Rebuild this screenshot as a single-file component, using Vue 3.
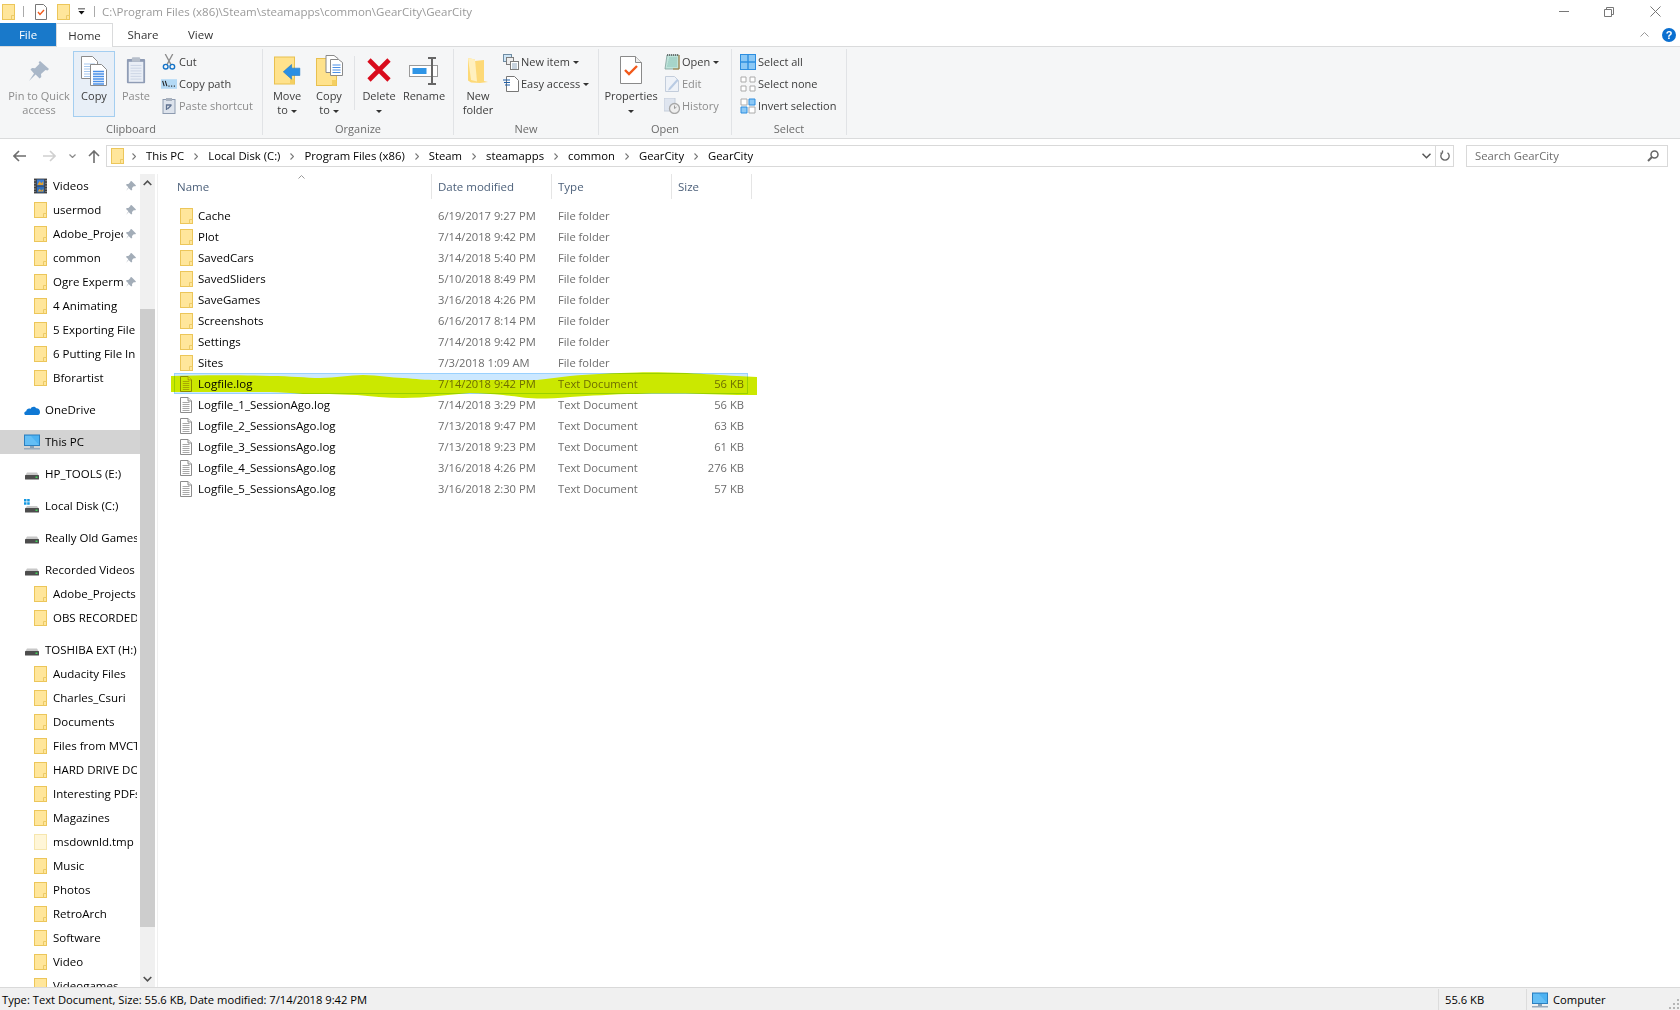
<template>
  <div class="window">
    <svg class="defs" width="0" height="0">
      <symbol id="folder" viewBox="0 0 13 16">
        <rect x=".5" y=".5" width="12" height="15" fill="#ffe69b" stroke="#ecc65a" />
        <path d="M9.5 15.500v-4h3" fill="none" stroke="#eccb68" />
      </symbol>
      <symbol id="paleFolder" viewBox="0 0 13 16">
        <rect x=".5" y=".5" width="12" height="15" fill="#fff6d8" stroke="#f6e6ae" />
      </symbol>
      <symbol id="textFile" viewBox="0 0 12 16">
        <path d="M.5.5h7.5l3.5 3.5v11.5h-11z" fill="#fff" stroke="#8c8c8c" />
        <path d="M8 .5v3.5h3.5" fill="#eee" stroke="#8c8c8c" />
        <path d="M2.5 5.5h7M2.5 7.5h7M2.5 9.5h7M2.5 11.5h7M2.5 13.5h7" stroke="#a8a8a8" />
      </symbol>
      <symbol id="film" viewBox="0 0 14 16">
        <rect width="14" height="16" fill="#3c3c3c" />
        <rect x="3" y="1" width="8" height="6.5" fill="#3d7fd6" />
        <rect x="3" y="8.5" width="8" height="6.5" fill="#2f6fbe" />
        <path d="M4 6l2-3 2 2 2-2v4H4z" fill="#e0a030" />
        <path d="M4 14l2-3 2 2 2-2v3z" fill="#e0a030" />
        <path d="M1 1.5v13M13 1.5v13" stroke="#ccc" stroke-dasharray="1.5 1.5" />
      </symbol>
      <symbol id="pin" viewBox="0 0 10 10">
        <path d="M5.5 0l4.500 4.500-1 1-1-.4-2 2 .2 1.700-1 .7-2.600-2.600L0 10l2.400-3.700L0 3.900l.7-1 1.700.2 2-2-.2-.6z" fill="#a3adb8" />
      </symbol>
      <symbol id="cloud" viewBox="0 0 16 16">
        <path d="M1 13c-1.400-1.500-.6-3.600 1.200-3.800C2.600 6.800 5 6 6.400 7 7.400 4.400 11 3.700 12.400 6.300c2.200 0 3.600 1.700 3.600 3.700 0 1.600-.7 3-2 3z" fill="#0f78d4" />
      </symbol>
      <symbol id="monitor" viewBox="0 0 16 16">
        <rect x=".5" y="1" width="15" height="10.500" fill="#4db2f2" stroke="#2b7fbf" />
        <path d="M1 11h14L7 2H1z" fill="#7cc9f7" opacity=".5" />
        <rect x="6" y="12" width="4" height="2" fill="#8aa0b4" />
        <rect y="14" width="16" height="1.500" fill="#98aabb" />
      </symbol>
      <symbol id="drive" viewBox="0 0 16 16">
        <path d="M1.500 9L3 6.500h10L14.500 9z" fill="#c8c8c8" />
        <rect x="1" y="9" width="14" height="4.500" rx=".5" fill="#4d4d4d" />
        <rect x="11.500" y="10.500" width="2" height="1.500" fill="#41d35a" />
      </symbol>
      <symbol id="windrive" viewBox="0 0 16 16">
        <path d="M1.500 10L3 8h10L14.500 10z" fill="#c8c8c8" />
        <rect x="1" y="10" width="14" height="4.500" rx=".5" fill="#4d4d4d" />
        <rect x="11.500" y="11.500" width="2" height="1.500" fill="#41d35a" />
        <path d="M0 1h2.500v2.500H0zM3.200 1h2.500v2.500H3.200zM0 4.200h2.500v2.500H0zM3.200 4.200h2.500v2.500H3.200z" fill="#1297e0" />
      </symbol>
      <symbol id="pinBig" viewBox="0 0 22 22">
        <path d="M12 1l9 8-1.500 1.500-2-.6-4.500 4 .3 3-1.700 1.500-4-4L1 21l5-7.500-3.500-4L4 8l3 .3 4.500-4.500-.9-1.500z" fill="#a9b7c8" />
      </symbol>
      <symbol id="copyBig" viewBox="0 0 26 30">
        <path d="M.5.5h11l5 5v17H.5z" fill="#fff" stroke="#8a8a8a" />
        <path d="M3 8h11M3 10.500h11M3 13h11M3 15.500h7M3 18h7M3 20.500h7" stroke="#a7c8ee" stroke-width="1.200" />
        <path d="M9.500 8.500h11l5 5v16h-16z" fill="#fff" stroke="#8a8a8a" />
        <path d="M12 15.500h11M12 18h11M12 20.500h11M12 23h11M12 25.500h11M12 28h11" stroke="#4a90e8" stroke-width="1.300" />
      </symbol>
      <symbol id="pasteBig" viewBox="0 0 22 30">
        <rect x="1" y="3" width="20" height="26.500" rx="1" fill="#8f9cb5" />
        <rect x="3" y="6" width="16" height="22" fill="#e9eef6" />
        <path d="M5 10h12M5 13h12M5 16h12M5 19h12M5 22h12M5 25h12" stroke="#c9d3e3" />
        <rect x="6.500" y="1" width="9" height="5" rx="1" fill="#b7bfcb" />
      </symbol>
      <symbol id="scissors" viewBox="0 0 14 17">
        <path d="M3 0l6 11M11 0L5 11" stroke="#8c8c8c" stroke-width="1.400" fill="none" />
        <circle cx="3.500" cy="13.500" r="2.500" fill="none" stroke="#1573c7" stroke-width="1.500" />
        <circle cx="10.500" cy="13.500" r="2.500" fill="none" stroke="#1573c7" stroke-width="1.500" />
      </symbol>
      <symbol id="copyPath" viewBox="0 0 15 10">
        <rect width="15" height="9" y=".5" fill="#b3d9f5" />
        <path d="M1.500 2l1.500 5M4 2l1.500 5" stroke="#222" fill="none" />
        <path d="M7 7h1M9.500 7h1M12 7h1" stroke="#222" />
      </symbol>
      <symbol id="pasteSmall" viewBox="0 0 13 16">
        <rect x=".5" y="1.500" width="12" height="14" fill="#dde3ec" stroke="#8d9bb0" />
        <rect x="3.500" y="0" width="6" height="3" fill="#a9b2bf" />
        <path d="M4 12V7h5M5 11l4-4" stroke="#5f7290" fill="none" stroke-width="1.300" />
      </symbol>
      <symbol id="moveBig" viewBox="0 0 27 28">
        <rect x=".5" y=".5" width="20" height="27" fill="#ffe28c" stroke="#e8c04f" />
        <rect x="16" y="22" width="4.500" height="5.500" fill="#f4cf62" />
        <path d="M9 21l9-8v4h9v8h-9v4z" transform="translate(1 -4) scale(.92)" fill="#2b8fe3" stroke="#1975c4" stroke-width=".6" />
      </symbol>
      <symbol id="copyToBig" viewBox="0 0 27 31">
        <rect x=".5" y="3.500" width="20" height="27" fill="#ffe28c" stroke="#e8c04f" />
        <rect x="16" y="25" width="4.500" height="5.500" fill="#f4cf62" />
        <path d="M10 .5h8l4 3v14H10z" fill="#fff" stroke="#8a8a8a" />
        <path d="M14.500 4.500h8l4 3v13h-12z" fill="#fff" stroke="#8a8a8a" />
        <path d="M16.500 10h8M16.500 12.500h8M16.500 15h8M16.500 17.500h8" stroke="#4a90e8" stroke-width="1.200" />
      </symbol>
      <symbol id="deleteBig" viewBox="0 0 26 26">
        <path d="M3 3l20 20M23 3L3 23" stroke="#d90b1c" stroke-width="4.600" />
      </symbol>
      <symbol id="renameBig" viewBox="0 0 30 28">
        <rect x=".5" y="8.500" width="28" height="11" fill="#fff" stroke="#9a9a9a" />
        <rect x="3.500" y="11" width="14" height="6" fill="#2f95e6" />
        <path d="M19 1h8M23 1v26M19 27h8" stroke="#666" stroke-width="2" fill="none" />
      </symbol>
      <symbol id="newFolderBig" viewBox="0 0 20 28">
        <path d="M0 1l7 1.500V4l9-1v21l4 1-8 1-9-.5-3-2z" fill="#fdd977" />
        <path d="M0 1l7 1.500 2 22-6-1.500z" fill="#fff0bf" />
      </symbol>
      <symbol id="newItem" viewBox="0 0 16 16">
        <rect x=".5" y=".5" width="8" height="7" fill="#cfe6f7" stroke="#6f8ca3" />
        <rect x="3.500" y="3.500" width="7" height="7" fill="#eee" stroke="#7d7d7d" />
        <rect x="7.500" y="7.500" width="8" height="8" fill="#fff" stroke="#7d7d7d" />
        <path d="M9 10h5M9 12h5M9 14h5" stroke="#8fa6bc" />
      </symbol>
      <symbol id="easyAccess" viewBox="0 0 16 16">
        <path d="M3.500.5h8l4 4v11h-12z" fill="#fff" stroke="#777" />
        <path d="M0 4h7M1 6.500h6M2 9h5" stroke="#1f5fa8" stroke-width="1.200" />
      </symbol>
      <symbol id="propsBig" viewBox="0 0 22 28">
        <path d="M.5.5h15l6 6v21H.5z" fill="#fff" stroke="#8a8a8a" />
        <path d="M15.500.5v6h6" fill="#eee" stroke="#8a8a8a" />
        <path d="M5 14l4 4 8-8" fill="none" stroke="#f2591a" stroke-width="2.400" />
      </symbol>
      <symbol id="openIcon" viewBox="0 0 16 16">
        <path d="M3 1h12v14H1z" fill="#bfe3da" stroke="#7f9f9a" stroke-width=".8" />
        <path d="M3 1h12" stroke="#555" stroke-width="1.400" stroke-dasharray="1 1" />
        <path d="M5 4h8M4.500 6h8.500M4 8h9M3.500 10h9.500M3 12h10" stroke="#8ec6ba" />
        <path d="M15 1v14H9" stroke="#a47d3a" fill="none" />
      </symbol>
      <symbol id="editIcon" viewBox="0 0 14 16">
        <path d="M.5.500h9l4 4v11H.5z" fill="#eef2f8" stroke="#c3cddb" />
        <path d="M4 12l8-9 1.500 1.500-8 9-2.500 1z" fill="#b9cbe3" />
      </symbol>
      <symbol id="historyIcon" viewBox="0 0 16 16">
        <rect x="0" y="0" width="11" height="13" fill="#dfe5ef" stroke="#c5cedb" />
        <circle cx="10.500" cy="10.500" r="5" fill="#eee" stroke="#a7a7a7" stroke-width="1.300" />
        <path d="M10.500 7.500v3l2-1.500" stroke="#9a9a9a" fill="none" />
      </symbol>
      <symbol id="selectAll" viewBox="0 0 16 16">
        <rect x=".5" y=".5" width="15" height="15" fill="#8cc8f5" stroke="#2d8ee0" />
        <path d="M8 0v16M0 8h16" stroke="#2d8ee0" stroke-width="1.400" />
      </symbol>
      <symbol id="selectNone" viewBox="0 0 16 16">
        <path d="M1 1h5v5H1zM10 1h5v5h-5zM1 10h5v5H1zM10 10h5v5h-5z" fill="#fff" stroke="#aaa" />
      </symbol>
      <symbol id="invert" viewBox="0 0 16 16">
        <path d="M1 1h6v6H1zM9 9h6v6H9z" fill="#fff" stroke="#aaa" />
        <path d="M9 1h6v6H9zM1 9h6v6H1z" fill="#8cc8f5" stroke="#2d8ee0" />
      </symbol>
    </svg>

    <header class="titlebar">
      <svg class="ic qat-folder"><use href="#folder" /></svg>
      <span class="qat-sep"></span>
      <svg class="ic qat-doc" viewBox="0 0 12 16"><path d="M.5.5h8l3 3v12H.5z" fill="#fff" stroke="#777" /><path d="M3 8l2 2.500 4-4.500" fill="none" stroke="#f2591a" stroke-width="1.400" /></svg>
      <svg class="ic qat-folder2"><use href="#folder" /></svg>
      <svg class="qat-drop" viewBox="0 0 8 7"><path d="M0 0h8v1H0zM.5 3h7L4 7z" fill="#111" /></svg>
      <span class="qat-sep sep2"></span>
      <span class="title-path">C:\Program Files (x86)\Steam\steamapps\common\GearCity\GearCity</span>
      <div class="win-btns">
        <svg class="w-min" viewBox="0 0 10 1"><path d="M0 .5h10" stroke="#777" /></svg>
        <svg class="w-max" viewBox="0 0 10 10"><path d="M.5 2.500h7v7h-7zM2.500 2.500v-2h7v7h-2" fill="none" stroke="#777" /></svg>
        <svg class="w-close" viewBox="0 0 11 11"><path d="M.5.500l10 10M10.500.5l-10 10" stroke="#777" /></svg>
      </div>
    </header>

    <nav class="tabs">
      <span class="tab tab-file">File</span>
      <span class="tab tab-home">Home</span>
      <span class="tab tab-share">Share</span>
      <span class="tab tab-view">View</span>
      <svg class="ribbon-collapse" viewBox="0 0 9 5"><path d="M.5 4.500l4-4 4 4" fill="none" stroke="#999" /></svg>
      <span class="help">?</span>
    </nav>

    <section class="ribbon">
      <div class="group g-clip">
        <div class="group-body">
          <div class="big off w-pin"><svg class="ic i-pin"><use href="#pinBig" /></svg><span class="lbl">Pin to Quick<br />access</span></div>
          <div class="big active w-copy"><svg class="ic i-copy"><use href="#copyBig" /></svg><span class="lbl">Copy</span></div>
          <div class="big off w-paste"><svg class="ic i-paste"><use href="#pasteBig" /></svg><span class="lbl">Paste</span></div>
          <div class="small-col">
            <div class="small"><svg class="ic s-ic"><use href="#scissors" /></svg>Cut</div>
            <div class="small"><svg class="ic s-ic"><use href="#copyPath" /></svg>Copy path</div>
            <div class="small off"><svg class="ic s-ic"><use href="#pasteSmall" /></svg>Paste shortcut</div>
          </div>
        </div>
        <div class="group-label">Clipboard</div>
      </div>

      <div class="group g-org">
        <div class="group-body">
          <div class="big w-move"><svg class="ic i-move"><use href="#moveBig" /></svg><span class="lbl">Move<br />to <i class="caret"></i></span></div>
          <div class="big w-copyto"><svg class="ic i-move"><use href="#copyToBig" /></svg><span class="lbl">Copy<br />to <i class="caret"></i></span></div>
          <span class="inner-sep"></span>
          <div class="big w-del"><svg class="ic i-del"><use href="#deleteBig" /></svg><span class="lbl">Delete<br /><i class="caret"></i></span></div>
          <div class="big w-ren"><svg class="ic i-ren"><use href="#renameBig" /></svg><span class="lbl">Rename</span></div>
        </div>
        <div class="group-label">Organize</div>
      </div>

      <div class="group g-new">
        <div class="group-body">
          <div class="big w-newf"><svg class="ic i-newf"><use href="#newFolderBig" /></svg><span class="lbl">New<br />folder</span></div>
          <div class="small-col">
            <div class="small"><svg class="ic s-ic"><use href="#newItem" /></svg>New item <i class="caret"></i></div>
            <div class="small"><svg class="ic s-ic"><use href="#easyAccess" /></svg>Easy access <i class="caret"></i></div>
          </div>
        </div>
        <div class="group-label">New</div>
      </div>

      <div class="group g-open">
        <div class="group-body">
          <div class="big w-props"><svg class="ic i-props"><use href="#propsBig" /></svg><span class="lbl">Properties<br /><i class="caret"></i></span></div>
          <div class="small-col">
            <div class="small"><svg class="ic s-ic"><use href="#openIcon" /></svg>Open <i class="caret"></i></div>
            <div class="small off"><svg class="ic s-ic"><use href="#editIcon" /></svg>Edit</div>
            <div class="small off"><svg class="ic s-ic"><use href="#historyIcon" /></svg>History</div>
          </div>
        </div>
        <div class="group-label">Open</div>
      </div>

      <div class="group g-select">
        <div class="group-body">
          <div class="small-col">
            <div class="small"><svg class="ic s-ic"><use href="#selectAll" /></svg>Select all</div>
            <div class="small"><svg class="ic s-ic"><use href="#selectNone" /></svg>Select none</div>
            <div class="small"><svg class="ic s-ic"><use href="#invert" /></svg>Invert selection</div>
          </div>
        </div>
        <div class="group-label">Select</div>
      </div>
    </section>

    <div class="addr-row">
      <div class="nav-btns">
        <svg class="n-back" viewBox="0 0 13 12"><path d="M6 1L1 6l5 5M1 6h12" fill="none" stroke="#6e6e6e" stroke-width="1.600" /></svg>
        <svg class="n-fwd" viewBox="0 0 13 12"><path d="M7 1l5 5-5 5M12 6H0" fill="none" stroke="#d0d0d0" stroke-width="1.600" /></svg>
        <svg class="n-down" viewBox="0 0 7 4"><path d="M.5.500L3.500 3.500 6.500.5" fill="none" stroke="#8a8a8a" stroke-width="1.200" /></svg>
        <svg class="n-up" viewBox="0 0 12 13"><path d="M1 6l5-5 5 5M6 1v12" fill="none" stroke="#6e6e6e" stroke-width="1.600" /></svg>
      </div>
      <div class="addressbar">
        <svg class="ic crumb-folder"><use href="#folder" /></svg>
        <template v-for="(c, i) in crumbs" :key="i">
          <svg class="chev" viewBox="0 0 4 7"><path d="M.5.500l3 3-3 3" fill="none" stroke="#777" stroke-width="1.100" /></svg>
          <span class="crumb">{{ c }}</span>
        </template>
        <svg class="addr-drop" viewBox="0 0 9 6"><path d="M.5.700l4 4 4-4" fill="none" stroke="#555" stroke-width="1.500" /></svg>
        <span class="addr-refresh">
          <svg viewBox="0 0 12 13" width="10" height="12"><path d="M3 2.500a5 5 0 1 0 6 0M3 2.500V0M3 3H.5" fill="none" stroke="#666" stroke-width="1.600" /></svg>
        </span>
      </div>
      <div class="searchbox">
        <span>Search GearCity</span>
        <svg viewBox="0 0 12 12" width="12" height="12"><circle cx="7.500" cy="4.500" r="3.500" fill="none" stroke="#666" stroke-width="1.500" /><path d="M5 7l-4 4" stroke="#666" stroke-width="2" /></svg>
      </div>
    </div>

    <main class="main">
      <aside class="nav">
        <div v-for="(item, i) in navItems" :key="i" class="nav-row" :class="{ top: item.top, current: item.current }">
          <svg class="ic nav-ic"><use :href="'#' + (item.icon || 'folder')" /></svg>
          <span class="nav-text" :class="{ pinned: item.pin }">{{ item.text }}</span>
          <svg v-if="item.pin" class="ic nav-pin"><use href="#pin" /></svg>
        </div>
      </aside>
      <div class="scrollbar">
        <div class="sb-btn"><svg viewBox="0 0 9 6" width="9" height="6"><path d="M.7 5l3.800-3.800L8.300 5" fill="none" stroke="#505050" stroke-width="1.600" /></svg></div>
        <div class="sb-space"></div>
        <div class="sb-thumb"></div>
        <div class="sb-rest"></div>
        <div class="sb-btn"><svg viewBox="0 0 9 6" width="9" height="6"><path d="M.7 1l3.800 3.800L8.300 1" fill="none" stroke="#505050" stroke-width="1.600" /></svg></div>
      </div>
      <div class="files">
        <div class="file-head">
          <div class="h-cell h-name">Name<svg class="sort" viewBox="0 0 7 4"><path d="M.5 3.500l3-3 3 3" fill="none" stroke="#999" /></svg></div>
          <div class="h-cell">Date modified</div>
          <div class="h-cell">Type</div>
          <div class="h-cell h-size">Size</div>
        </div>
        <div class="file-list">
          <div v-for="f in files" :key="f.name" class="file-row" :class="{ selected: f.selected }">
            <div class="c-name">
              <svg class="ic file-ic" :class="{ doc: f.size }"><use :href="f.size ? '#textFile' : '#folder'" /></svg>{{ f.name }}
            </div>
            <div class="c-dim">{{ f.date }}</div>
            <div class="c-dim">{{ f.size ? 'Text Document' : 'File folder' }}</div>
            <div class="c-dim c-size">{{ f.size }}</div>
          </div>
          <svg class="marker" viewBox="0 0 590 28" width="590" height="28">
            <path d="M0 4C30 3 70 3 99 4 120 4 135 6 149 6 165 6 178 3 192 3 208 3 220 6 232 6 245 7 255 8 266 8 285 8 300 8 366 8 378 7 388 5 399 4 420 2 445 1 466 .5 485 0 500 1 516 1 535 2 550 3 566 4L586 5 586 23 566 23C535 22 500 21 466 22 440 22 420 24 399 25 388 26 378 26.600 366 26.600 352 26 342 24 332 23 320 22 310 21 299 21 288 22 277 23 266 24 255 25 244 26 232 26 215 26 200 24 186 23 165 22 150 22 132 22 120 21 110 20 99 20L0 20Z" fill="#cbe800" />
          </svg>
        </div>
      </div>
    </main>

    <footer class="statusbar">
      <span class="st-main">Type: Text Document, Size: 55.6 KB, Date modified: 7/14/2018 9:42 PM</span>
      <span class="st-size">55.6 KB</span>
      <span class="st-zone"><svg class="ic st-ic"><use href="#monitor" /></svg>Computer</span>
      <svg class="grip" viewBox="0 0 10 10"><path d="M8 0h2v2H8zM4 4h2v2H4zM8 4h2v2H8zM0 8h2v2H0zM4 8h2v2H4zM8 8h2v2H8z" fill="#b5b5b5" /></svg>
    </footer>
  </div>
</template>

<script setup>
const crumbs = ['This PC', 'Local Disk (C:)', 'Program Files (x86)', 'Steam', 'steamapps', 'common', 'GearCity', 'GearCity']

const navItems = [
  { text: 'Videos', icon: 'film', pin: true },
  { text: 'usermod', pin: true },
  { text: 'Adobe_Projec', pin: true },
  { text: 'common', pin: true },
  { text: 'Ogre Experm', pin: true },
  { text: '4 Animating' },
  { text: '5 Exporting File' },
  { text: '6 Putting File In' },
  { text: 'Bforartist' },
  { text: 'OneDrive', icon: 'cloud', top: true },
  { text: 'This PC', icon: 'monitor', top: true, current: true },
  { text: 'HP_TOOLS (E:)', icon: 'drive', top: true },
  { text: 'Local Disk (C:)', icon: 'windrive', top: true },
  { text: 'Really Old Games', icon: 'drive', top: true },
  { text: 'Recorded Videos (', icon: 'drive', top: true },
  { text: 'Adobe_Projects' },
  { text: 'OBS RECORDED' },
  { text: 'TOSHIBA EXT (H:)', icon: 'drive', top: true },
  { text: 'Audacity Files' },
  { text: 'Charles_Csuri' },
  { text: 'Documents' },
  { text: 'Files from MVCT' },
  { text: 'HARD DRIVE DO' },
  { text: 'Interesting PDFs' },
  { text: 'Magazines' },
  { text: 'msdownld.tmp', icon: 'paleFolder' },
  { text: 'Music' },
  { text: 'Photos' },
  { text: 'RetroArch' },
  { text: 'Software' },
  { text: 'Video' },
  { text: 'Videogames' }
]

const files = [
  { name: 'Cache', date: '6/19/2017 9:27 PM' },
  { name: 'Plot', date: '7/14/2018 9:42 PM' },
  { name: 'SavedCars', date: '3/14/2018 5:40 PM' },
  { name: 'SavedSliders', date: '5/10/2018 8:49 PM' },
  { name: 'SaveGames', date: '3/16/2018 4:26 PM' },
  { name: 'Screenshots', date: '6/16/2017 8:14 PM' },
  { name: 'Settings', date: '7/14/2018 9:42 PM' },
  { name: 'Sites', date: '7/3/2018 1:09 AM' },
  { name: 'Logfile.log', date: '7/14/2018 9:42 PM', size: '56 KB', selected: true },
  { name: 'Logfile_1_SessionAgo.log', date: '7/14/2018 3:29 PM', size: '56 KB' },
  { name: 'Logfile_2_SessionsAgo.log', date: '7/13/2018 9:47 PM', size: '63 KB' },
  { name: 'Logfile_3_SessionsAgo.log', date: '7/13/2018 9:23 PM', size: '61 KB' },
  { name: 'Logfile_4_SessionsAgo.log', date: '3/16/2018 4:26 PM', size: '276 KB' },
  { name: 'Logfile_5_SessionsAgo.log', date: '3/16/2018 2:30 PM', size: '57 KB' }
]
</script>

<style>
html,
body {
  margin: 0;
  background: #fff;
  overflow: hidden;
}
</style>

<style scoped>
.window {
  width: 1680px;
  height: 1010px;
  display: flex;
  flex-direction: column;
  overflow: hidden;
  background: #fff;
  color: #000;
  font-family: "Open Sans", "Noto Sans", sans-serif;
  font-size: 11.5px;
  line-height: 14px;
}
.defs {
  position: absolute;
}
.ic {
  display: block;
  flex: none;
}

/* title bar */
.titlebar {
  height: 23px;
  display: flex;
  align-items: center;
  flex: none;
}
.qat-folder {
  width: 13px;
  height: 16px;
  margin-left: 2px;
}
.qat-sep {
  width: 1px;
  height: 11px;
  background: #aaa;
  margin-left: 8px;
}
.qat-doc {
  width: 12px;
  height: 16px;
  margin-left: 11px;
}
.qat-folder2 {
  width: 13px;
  height: 16px;
  margin-left: 10px;
}
.qat-drop {
  width: 7px;
  height: 7px;
  margin-left: 8px;
}
.sep2 {
  margin-left: 9px;
}
.title-path {
  margin-left: 7px;
  color: #9a9a9a;
  font-size: 11.5px;
}
.win-btns {
  margin-left: auto;
  display: flex;
  align-items: center;
  height: 20px;
  padding-right: 19px;
}
.w-min {
  width: 10px;
  height: 1px;
}
.w-max {
  width: 10px;
  height: 10px;
  margin-left: 35px;
}
.w-close {
  width: 11px;
  height: 11px;
  margin-left: 36px;
}

/* tabs */
.tabs {
  height: 23px;
  flex: none;
  display: flex;
  align-items: stretch;
  border-bottom: 1px solid #dadbdc;
  position: relative;
}
.tab {
  display: flex;
  align-items: center;
  justify-content: center;
  color: #333;
  font-size: 11.5px;
}
.tab-file {
  width: 56px;
  background: #1979ca;
  color: #fff;
}
.tab-home {
  width: 57px;
  background: #fff;
  border: 1px solid #dadbdc;
  border-bottom: none;
  box-sizing: border-box;
  height: 24px;
}
.tab-share {
  width: 60px;
}
.tab-view {
  width: 55px;
}
.ribbon-collapse {
  width: 9px;
  height: 5px;
  margin-left: auto;
  align-self: center;
  margin-right: 13px;
}
.help {
  width: 14px;
  height: 14px;
  border-radius: 50%;
  background: #0a6fd0;
  color: #fff;
  font: bold 11px/14px "Liberation Sans", sans-serif;
  text-align: center;
  align-self: center;
  margin-right: 4px;
}

/* ribbon */
.ribbon {
  height: 92px;
  flex: none;
  box-sizing: border-box;
  background: #f5f6f7;
  border-bottom: 1px solid #dadbdc;
  padding: 2px 0 3px;
  display: flex;
  color: #3c3c3c;
  font-size: 11px;
}
.group {
  display: flex;
  flex-direction: column;
  border-right: 1px solid #e1e3e6;
  box-sizing: border-box;
}
.g-clip {
  width: 263px;
  padding-left: 6px;
}
.g-org {
  width: 191px;
  padding-left: 4px;
}
.g-new {
  width: 145px;
  padding-left: 4px;
}
.g-open {
  width: 133px;
  padding-left: 4px;
}
.g-select {
  width: 115px;
  padding-left: 3px;
}
.group-body {
  display: flex;
  padding-top: 2px;
  box-sizing: border-box;
  height: 73px;
}
.group-label {
  text-align: center;
  color: #6b6b6b;
  height: 13px;
  line-height: 13px;
  margin-left: -6px;
}
.g-org .group-label,
.g-new .group-label,
.g-open .group-label {
  margin-left: -4px;
}
.g-select .group-label {
  margin-left: -3px;
}
.big {
  height: 66px;
  display: flex;
  flex-direction: column;
  align-items: center;
  box-sizing: border-box;
  flex: none;
  position: relative;
}
.lbl {
  position: absolute;
  top: 38px;
  left: -6px;
  right: -6px;
  text-align: center;
  line-height: 14px;
}
.off {
  color: #8c8c8c;
}
.active {
  background: #e8eff7;
  outline: 1px solid #a4cef0;
  outline-offset: -1px;
}
.w-pin { width: 66px; }
.w-copy { width: 42px; margin-left: 1px; }
.w-paste { width: 40px; margin-left: 1px; }
.w-move { width: 40px; }
.w-copyto { width: 42px; margin-left: 1px; }
.w-del { width: 42px; margin-left: 8px; }
.w-ren { width: 44px; margin-left: 2px; }
.w-newf { width: 40px; }
.w-props { width: 56px; }
.i-pin { width: 22px; height: 22px; margin-top: 9px; }
.i-copy { width: 26px; height: 30px; margin-top: 5px; }
.i-paste { width: 20px; height: 30px; margin-top: 4px; }
.i-move { width: 27px; height: 31px; margin-top: 4px; }
.i-del { width: 26px; height: 26px; margin-top: 6px; }
.i-ren { width: 30px; height: 28px; margin-top: 6px; }
.i-newf { width: 20px; height: 28px; margin-top: 6px; }
.i-props { width: 22px; height: 28px; margin-top: 5px; }
.inner-sep {
  width: 1px;
  height: 54px;
  background: #e1e3e6;
  margin: 5px -5px 0 4px;
  flex: none;
}
.small-col {
  margin-left: 4px;
  display: flex;
  flex-direction: column;
}
.small {
  height: 22px;
  display: flex;
  align-items: center;
  white-space: nowrap;
}
.s-ic {
  width: 16px;
  height: 16px;
  margin-right: 2px;
  margin-left: 1px;
}
.caret {
  display: inline-block;
  width: 0;
  height: 0;
  border-top: 3px solid #333;
  border-left: 3px solid transparent;
  border-right: 3px solid transparent;
  vertical-align: middle;
  margin-left: 3px;
}
.lbl br + .caret {
  margin-left: 0;
}

/* address row */
.addr-row {
  height: 31px;
  flex: none;
  display: flex;
  padding-top: 6px;
  box-sizing: border-box;
}
.nav-btns {
  width: 106px;
  height: 22px;
  display: flex;
  align-items: center;
  flex: none;
}
.n-back { width: 13px; height: 12px; margin-left: 13px; }
.n-fwd { width: 13px; height: 12px; margin-left: 17px; }
.n-down { width: 7px; height: 4px; margin-left: 13px; }
.n-up { width: 12px; height: 13px; margin-left: 12px; }
.addressbar {
  width: 1348px;
  height: 22px;
  box-sizing: border-box;
  border: 1px solid #d9d9d9;
  display: flex;
  align-items: center;
  font-size: 11.3px;
}
.crumb-folder {
  width: 13px;
  height: 16px;
  margin: 0 -2px 0 4px;
}
.chev {
  width: 4px;
  height: 7px;
  margin: 0 10px;
  flex: none;
}
.crumb {
  white-space: nowrap;
}
.addr-drop {
  width: 9px;
  height: 6px;
  margin-left: auto;
  margin-right: 4px;
}
.addr-refresh {
  width: 17px;
  height: 20px;
  border-left: 1px solid #d9d9d9;
  display: flex;
  align-items: center;
  justify-content: center;
}
.searchbox {
  width: 202px;
  height: 22px;
  margin-left: 12px;
  box-sizing: border-box;
  border: 1px solid #d9d9d9;
  display: flex;
  align-items: center;
  justify-content: space-between;
  padding: 0 8px;
  color: #6d6d6d;
  font-size: 11.3px;
}

/* main */
.main {
  flex: 1;
  display: flex;
  min-height: 0;
  padding-top: 4px;
  overflow: hidden;
}
.nav {
  width: 140px;
  flex: none;
  overflow: hidden;
}
.nav-row {
  height: 24px;
  display: flex;
  align-items: center;
  padding-left: 34px;
  white-space: nowrap;
}
.nav-row.top {
  margin-top: 8px;
  padding-left: 24px;
}
.nav-row.current {
  background: #d3d3d3;
  width: 139px;
}
.nav-ic {
  width: 13px;
  height: 16px;
}
.top .nav-ic {
  width: 16px;
  height: 16px;
}
.nav-text {
  margin-left: 6px;
  width: 84px;
  overflow: hidden;
}
.top .nav-text {
  margin-left: 5px;
  width: 92px;
}
.nav-text.pinned {
  width: 70px;
}
.nav-pin {
  width: 10px;
  height: 10px;
  margin-left: 3px;
}
.scrollbar {
  width: 15px;
  flex: none;
  background: #f0f0f0;
  display: flex;
  flex-direction: column;
}
.sb-btn {
  height: 17px;
  flex: none;
  display: flex;
  align-items: center;
  justify-content: center;
}
.sb-space {
  height: 118px;
  flex: none;
}
.sb-thumb {
  height: 618px;
  flex: none;
  background: #cdcdcd;
}
.sb-rest {
  flex: 1;
}
.files {
  flex: 1;
  margin-left: 2px;
  border-left: 1px solid #f0f0f0;
  padding-left: 16px;
  min-width: 0;
}
.file-head {
  display: grid;
  grid-template-columns: 258px 120px 120px 80px;
  height: 24px;
  margin-bottom: 7px;
}
.h-cell {
  border-right: 1px solid #e5e5e5;
  color: #4c607a;
  padding-left: 6px;
  line-height: 25px;
  position: relative;
}
.h-name {
  padding-left: 3px;
}
.sort {
  position: absolute;
  width: 7px;
  height: 4px;
  left: 124px;
  top: 1px;
}
.file-list {
  position: relative;
  width: 574px;
}
.file-row {
  display: grid;
  grid-template-columns: 258px 120px 120px 76px;
  height: 21px;
  align-items: center;
  box-sizing: border-box;
  position: relative;
}
.file-row.selected {
  background: #cce8ff;
  outline: 1px solid #99d1ff;
  outline-offset: -1px;
}
.c-name {
  display: flex;
  align-items: center;
  padding-left: 6px;
  white-space: nowrap;
}
.file-ic {
  width: 13px;
  height: 16px;
  margin-right: 5px;
}
.file-ic.doc {
  width: 12px;
  margin-right: 6px;
}
.c-dim {
  color: #6d6d6d;
  padding-left: 6px;
  white-space: nowrap;
  font-size: 11.2px;
}
.c-size {
  text-align: right;
  padding: 0 4px 0 0;
}
.marker {
  position: absolute;
  left: -3px;
  top: 167px;
  mix-blend-mode: darken;
  pointer-events: none;
}

/* status bar */
.statusbar {
  height: 23px;
  flex: none;
  box-sizing: border-box;
  background: #f0f0f0;
  border-top: 1px solid #d9d9d9;
  padding-top: 1px;
  display: flex;
  align-items: center;
  font-size: 11.2px;
  position: relative;
}
.st-main {
  padding-left: 2px;
  width: 1438px;
  box-sizing: border-box;
  flex: none;
}
.st-size {
  width: 88px;
  flex: none;
  box-sizing: border-box;
  border-left: 1px solid #dcdcdc;
  padding-left: 6px;
  height: 21px;
  line-height: 21px;
}
.st-zone {
  border-left: 1px solid #dcdcdc;
  display: flex;
  align-items: center;
  padding-left: 5px;
  height: 21px;
}
.st-ic {
  width: 16px;
  height: 16px;
  margin-right: 5px;
}
.grip {
  position: absolute;
  width: 10px;
  height: 10px;
  right: 1px;
  bottom: 1px;
}
</style>
